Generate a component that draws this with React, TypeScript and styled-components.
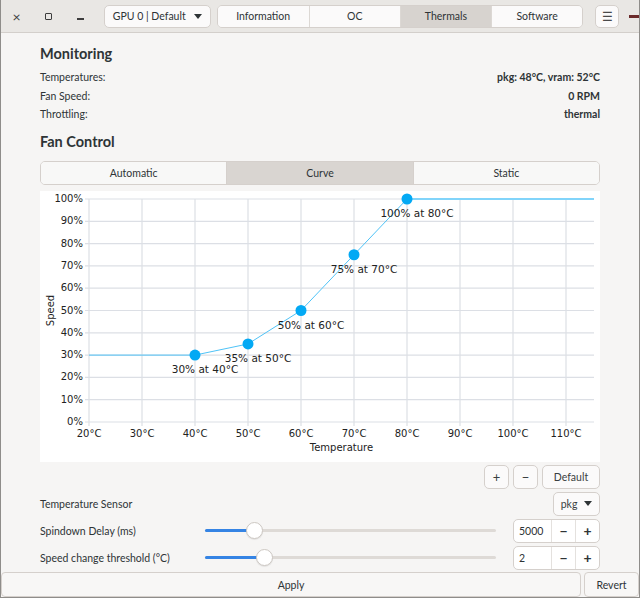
import React from 'react';
import styled, {createGlobalStyle, css} from 'styled-components';

const GlobalStyle = createGlobalStyle`
  html, body {
    margin: 0;
    padding: 0;
    background: #f6f5f4;
  }
  * {
    box-sizing: border-box;
  }
`

const UI_FONT = `Lato, "Noto Sans", sans-serif`
const CHART_FONT = `"DejaVu Sans", sans-serif`

type Point = { t: number, s: number }

const points: Point[] = [
    {t: 40, s: 30},
    {t: 50, s: 35},
    {t: 60, s: 50},
    {t: 70, s: 75},
    {t: 80, s: 100},
]

const CHART_W = 562
const CHART_H = 271
const X0 = 49
const X_END = 554
const Y_TOP = 8
const Y_BOTTOM = 231
const px = (t: number) => X0 + (t - 20) * 5.3
const py = (s: number) => Y_BOTTOM - (s / 100) * (Y_BOTTOM - Y_TOP)

const FanCurve = () => {
    const temps = [20, 30, 40, 50, 60, 70, 80, 90, 100, 110]
    const speeds = [0, 10, 20, 30, 40, 50, 60, 70, 80, 90, 100]
    const first = points[0]
    const last = points[points.length - 1]
    const line = [
        `${X0},${py(first.s)}`,
        ...points.map(p => `${px(p.t)},${py(p.s)}`),
        `${X_END},${py(last.s)}`,
    ].join(' ')

    return (
        <svg width={CHART_W} height={CHART_H} viewBox={`0 0 ${CHART_W} ${CHART_H}`}>
            {speeds.map(s => (
                <g key={s}>
                    <line x1={X0 - 4} x2={X_END} y1={py(s)} y2={py(s)} stroke="#dcdfe5" strokeWidth={1.2}/>
                    <text x={X0 - 6} y={py(s)} textAnchor="end" dominantBaseline="middle"
                          fontFamily={CHART_FONT} fontSize={10} fill="#222">{s}%</text>
                </g>
            ))}
            {temps.map(t => (
                <g key={t}>
                    <line x1={px(t)} x2={px(t)} y1={Y_TOP} y2={Y_BOTTOM + 4} stroke="#dcdfe5" strokeWidth={1.2}/>
                    <text x={px(t)} y={Y_BOTTOM + 12} textAnchor="middle" dominantBaseline="middle"
                          fontFamily={CHART_FONT} fontSize={10} fill="#222">{t}°C</text>
                </g>
            ))}
            <text x={(X0 + X_END) / 2} y={Y_BOTTOM + 26} textAnchor="middle" dominantBaseline="middle"
                  fontFamily={CHART_FONT} fontSize={10} fill="#222">Temperature</text>
            <text x={11} y={(Y_TOP + Y_BOTTOM) / 2} textAnchor="middle" dominantBaseline="middle"
                  transform={`rotate(-90 11 ${(Y_TOP + Y_BOTTOM) / 2})`}
                  fontFamily={CHART_FONT} fontSize={10} fill="#222">Speed</text>
            <polyline points={line} fill="none" stroke="#4fc3f7" strokeWidth={1}/>
            <line x1={px(last.t)} x2={X_END} y1={py(100)} y2={py(100)} stroke="#81d4fa" strokeWidth={2}/>
            {points.map(p => (
                <g key={p.t}>
                    <circle cx={px(p.t)} cy={py(p.s)} r={5.5} fill="#03a9f4"/>
                    <text x={px(p.t) + 10} y={py(p.s) + 15} textAnchor="middle" dominantBaseline="middle"
                          fontFamily={CHART_FONT} fontSize={10.5} fill="#222">{p.s}% at {p.t}°C</text>
                </g>
            ))}
        </svg>
    )
}

const Slider = (props: { value: number }) => (
    <SliderTrack>
        <SliderFill style={{width: props.value}}/>
        <SliderKnob style={{left: props.value - 8}}/>
    </SliderTrack>
)

const SpinButton = (props: { value: string }) => (
    <Spin>
        <SpinEntry>{props.value}</SpinEntry>
        <SpinBtn>−</SpinBtn>
        <SpinBtn>+</SpinBtn>
    </Spin>
)

export default function App() {
    return (
        <>
            <GlobalStyle/>
            <Window>
                <HeaderBar>
                    <WindowControls>
                        <WinButton>×</WinButton>
                        <WinButton><MaxIcon/></WinButton>
                        <WinButton><MinIcon/></WinButton>
                    </WindowControls>
                    <DropButton>GPU 0 | Default <Caret/></DropButton>
                    <TabGroup>
                        <Tab>Information</Tab>
                        <Tab>OC</Tab>
                        <Tab active>Thermals</Tab>
                        <Tab>Software</Tab>
                    </TabGroup>
                    <MenuButton>☰</MenuButton>
                    <Artifact/>
                </HeaderBar>

                <Content>
                    <SectionTitle>Monitoring</SectionTitle>
                    <InfoList>
                        <InfoRow>
                            <span>Temperatures:</span>
                            <Value>pkg: 48°C, vram: 52°C</Value>
                        </InfoRow>
                        <InfoRow>
                            <span>Fan Speed:</span>
                            <Value>0 RPM</Value>
                        </InfoRow>
                        <InfoRow>
                            <span>Throttling:</span>
                            <Value>thermal</Value>
                        </InfoRow>
                    </InfoList>

                    <SectionTitle second>Fan Control</SectionTitle>
                    <Segmented>
                        <Segment>Automatic</Segment>
                        <Segment active>Curve</Segment>
                        <Segment>Static</Segment>
                    </Segmented>

                    <ChartBox>
                        <FanCurve/>
                    </ChartBox>

                    <ButtonRow>
                        <SmallButton width={25}>+</SmallButton>
                        <SmallButton width={25}>−</SmallButton>
                        <SmallButton width={58}>Default</SmallButton>
                    </ButtonRow>

                    <SettingRow>
                        <SettingLabel>Temperature Sensor</SettingLabel>
                        <SmallButton width={47}>pkg <Caret/></SmallButton>
                    </SettingRow>
                    <SettingRow>
                        <SettingLabel>Spindown Delay (ms)</SettingLabel>
                        <Slider value={49}/>
                        <SpinButton value="5000"/>
                    </SettingRow>
                    <SettingRow>
                        <SettingLabel>Speed change threshold (°C)</SettingLabel>
                        <Slider value={59}/>
                        <SpinButton value="2"/>
                    </SettingRow>
                </Content>

                <BottomBar>
                    <BarButton grow>Apply</BarButton>
                    <BarButton>Revert</BarButton>
                </BottomBar>
            </Window>
        </>
    )
}

const Window = styled.div`
  width: 640px;
  height: 598px;
  display: flex;
  flex-direction: column;
  border-left: 1px solid #8f8d8a;
  border-right: 1px solid #8f8d8a;
  border-bottom: 1px solid #8f8d8a;
  background: #f6f5f4;
  font-family: ${UI_FONT};
  font-size: 10.5px;
  color: #2e3436;
  overflow: hidden;
`

const HeaderBar = styled.div`
  height: 33px;
  flex-shrink: 0;
  display: flex;
  align-items: center;
  background: #e9e7e4;
  border-bottom: 1px solid #d3cfcb;
`

const WindowControls = styled.div`
  display: flex;
  width: 96px;
`

const WinButton = styled.div`
  width: 31px;
  height: 22px;
  display: flex;
  align-items: center;
  justify-content: center;
  font-size: 14px;
  color: #3d3d3d;
  margin-right: 1px;
`

const MaxIcon = styled.span`
  width: 7px;
  height: 7px;
  border: 1.2px solid #3d3d3d;
  border-radius: 1px;
`

const MinIcon = styled.span`
  width: 7px;
  height: 1.2px;
  margin-top: 6px;
  background: #3d3d3d;
`

const buttonBase = css`
  background: #fbfafa;
  border: 1px solid #d5d0cc;
  border-radius: 5px;
  display: flex;
  align-items: center;
  justify-content: center;
  color: #2e3436;
  font-family: ${UI_FONT};
  font-size: 10.5px;
`

const DropButton = styled.div`
  ${buttonBase};
  margin-left: 7px;
  width: 107px;
  height: 23px;
  gap: 8px;
`

const Caret = styled.span`
  width: 0;
  height: 0;
  border-left: 4px solid transparent;
  border-right: 4px solid transparent;
  border-top: 5px solid #2e3436;
`

const TabGroup = styled.div`
  margin-left: 6px;
  display: flex;
  height: 23px;
  border: 1px solid #d5d0cc;
  border-radius: 5px;
  overflow: hidden;
`

const Tab = styled.div<{ active?: boolean }>`
  width: 91.5px;
  display: flex;
  align-items: center;
  justify-content: center;
  background: ${p => p.active ? '#d7d3cf' : '#fbfafa'};
  border-left: 1px solid #dcd8d4;

  &:first-child {
    border-left: none;
  }
`

const MenuButton = styled.div`
  ${buttonBase};
  margin-left: 12px;
  width: 24px;
  height: 23px;
  font-size: 12px;
  color: #4a4a4a;
`

const Artifact = styled.div`
  margin-left: 10px;
  width: 10px;
  height: 3px;
  background: #6b2a2a;
`

const Content = styled.div`
  flex: 1;
  padding: 0 39px 0 39px;
  display: flex;
  flex-direction: column;
`

const SectionTitle = styled.div<{ second?: boolean }>`
  font-weight: 700;
  font-size: 14.5px;
  line-height: 20px;
  color: #2e3436;
  margin-top: ${p => p.second ? '8px' : '11px'};
`

const InfoList = styled.div`
  margin-top: 4px;
  display: flex;
  flex-direction: column;
`

const InfoRow = styled.div`
  height: 18.5px;
  display: flex;
  align-items: center;
  justify-content: space-between;
`

const Value = styled.span`
  font-weight: 700;
`

const Segmented = styled.div`
  margin-top: 9px;
  height: 24px;
  display: flex;
  border: 1px solid #d5d0cc;
  border-radius: 5px;
  overflow: hidden;
`

const Segment = styled.div<{ active?: boolean }>`
  flex: 1;
  display: flex;
  align-items: center;
  justify-content: center;
  background: ${p => p.active ? '#d9d5d1' : '#f8f8f7'};
  border-left: 1px solid #d5d0cc;

  &:first-child {
    border-left: none;
  }
`

const ChartBox = styled.div`
  margin-top: 6px;
  height: ${CHART_H}px;
  background: #ffffff;
  line-height: 0;
`

const ButtonRow = styled.div`
  margin-top: 3px;
  height: 24px;
  display: flex;
  justify-content: flex-end;
  gap: 4px;
`

const SmallButton = styled.div<{ width: number }>`
  ${buttonBase};
  width: ${p => p.width}px;
  height: 24px;
  gap: 7px;
  font-size: ${p => p.width < 30 ? '13px' : '10.5px'};
  color: #3a3f41;
`

const SettingRow = styled.div`
  margin-top: 3px;
  height: 24px;
  display: flex;
  align-items: center;
  justify-content: flex-end;
`

const SettingLabel = styled.div`
  flex: 1;
`

const SliderTrack = styled.div`
  position: relative;
  width: 291px;
  height: 3px;
  margin-right: 17px;
  border-radius: 2px;
  background: #dedad6;
`

const SliderFill = styled.div`
  height: 3px;
  border-radius: 2px;
  background: #3584e4;
`

const SliderKnob = styled.div`
  position: absolute;
  top: -7px;
  width: 17px;
  height: 17px;
  border-radius: 50%;
  background: #ffffff;
  border: 1px solid #cdc8c3;
  box-shadow: 0 1px 1px rgba(0, 0, 0, 0.08);
`

const Spin = styled.div`
  width: 87px;
  height: 24px;
  display: flex;
  border: 1px solid #d5d0cc;
  border-radius: 5px;
  background: #ffffff;
  overflow: hidden;
`

const SpinEntry = styled.div`
  width: 37px;
  padding-left: 5px;
  display: flex;
  align-items: center;
`

const SpinBtn = styled.div`
  flex: 1;
  display: flex;
  align-items: center;
  justify-content: center;
  border-left: 1px solid #e4e1de;
  font-size: 14px;
  font-weight: 700;
  color: #2e3436;
`

const BottomBar = styled.div`
  height: 25px;
  flex-shrink: 0;
  display: flex;
  gap: 3px;
`

const BarButton = styled.div<{ grow?: boolean }>`
  ${buttonBase};
  border-radius: 4px;
  flex: ${p => p.grow ? 1 : 'none'};
  width: ${p => p.grow ? 'auto' : '55px'};
  height: 25px;
  background: #f8f7f6;
`
